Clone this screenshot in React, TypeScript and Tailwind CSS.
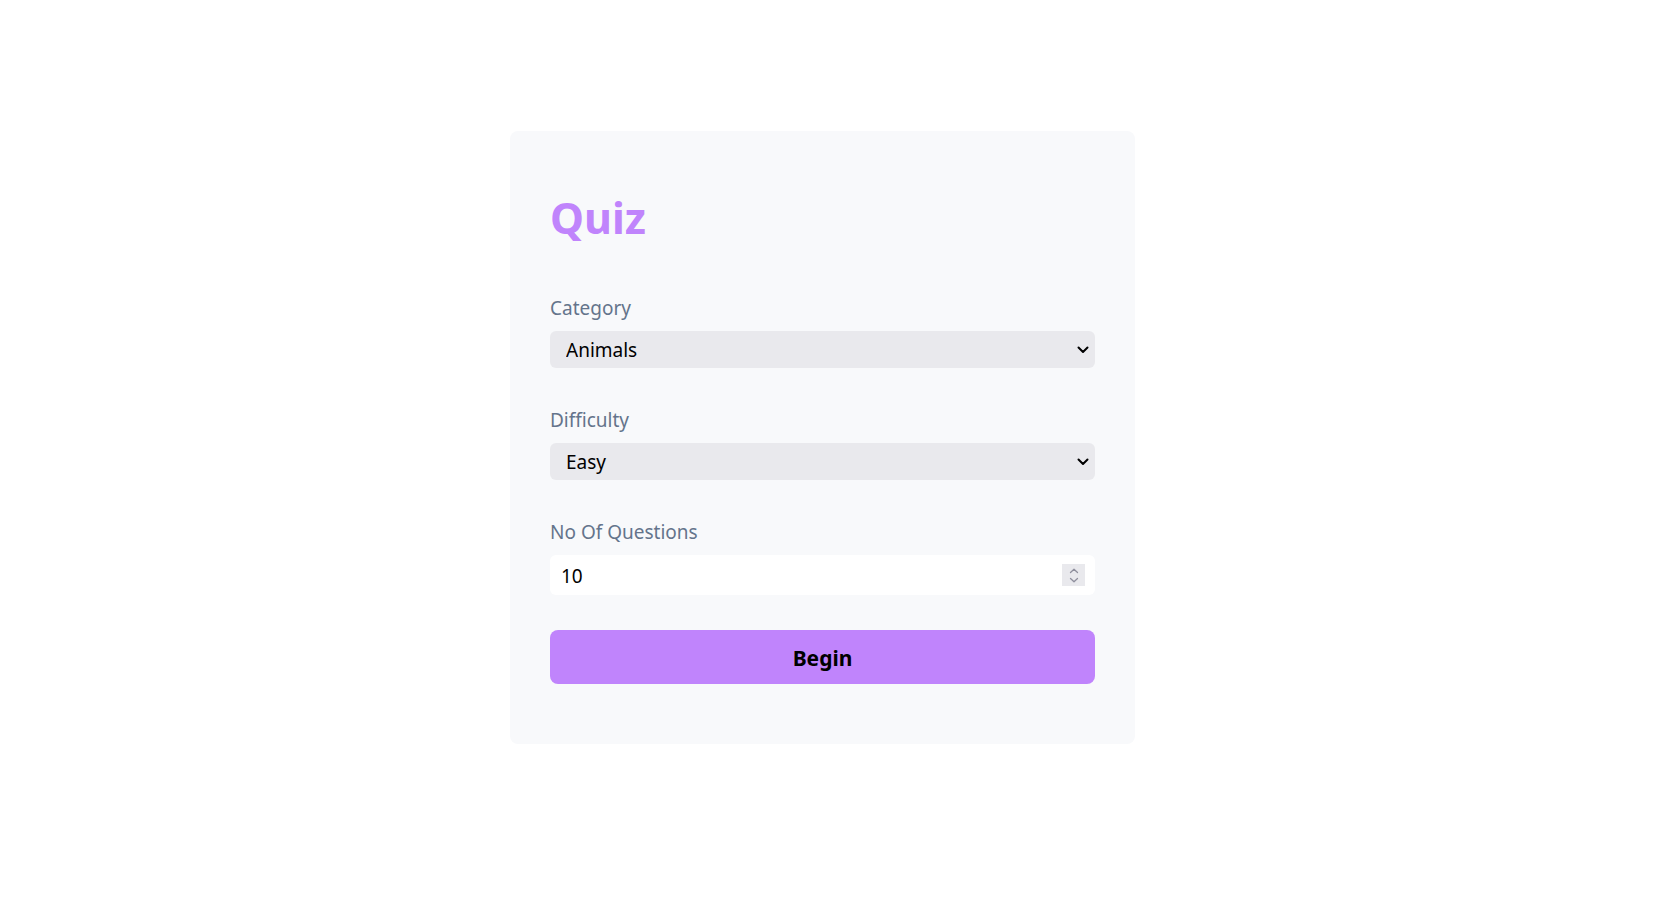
import React from "react";

function Chevron() {
  return (
    <svg width="12" height="8" viewBox="0 0 12 8" className="pointer-events-none shrink-0">
      <path d="M1.5 1.5 L6 6 L10.5 1.5" fill="none" stroke="#000" strokeWidth="2" strokeLinecap="round" strokeLinejoin="round" />
    </svg>
  );
}

function Spinner() {
  return (
    <div className="flex h-[22px] w-[23px] shrink-0 flex-col items-center justify-center gap-[3px] bg-[#e9e9ed]">
      <svg width="10" height="6" viewBox="0 0 10 6">
        <path d="M1.5 4.5 L5 1.2 L8.5 4.5" fill="none" stroke="#8f8f9d" strokeWidth="1.3" strokeLinecap="round" strokeLinejoin="round" />
      </svg>
      <svg width="10" height="6" viewBox="0 0 10 6">
        <path d="M1.5 1.5 L5 4.8 L8.5 1.5" fill="none" stroke="#8f8f9d" strokeWidth="1.3" strokeLinecap="round" strokeLinejoin="round" />
      </svg>
    </div>
  );
}

function SelectField({ label, value, options }: { label: string; value: string; options: string[] }) {
  return (
    <div className="flex flex-col">
      <label className="mb-[9px] text-[19px] leading-[28px] text-[#64748b]">{label}</label>
      <div className="flex h-[37px] items-center rounded-md bg-[#e9e9ed] pr-[6px]">
        <select
          defaultValue={value}
          className="h-full flex-1 appearance-none bg-transparent pl-4 pt-[1px] text-[19px] leading-[28px] text-black outline-none"
        >
          {options.map((o) => (
            <option key={o}>{o}</option>
          ))}
        </select>
        <Chevron />
      </div>
    </div>
  );
}

export default function App() {
  return (
    <div
      className="min-h-screen w-full bg-white"
      style={{ fontFamily: '"Noto Sans", "Open Sans", sans-serif' }}
    >
      <div className="flex justify-center pr-[20px] pt-[131px]">
        <div className="w-[625px] rounded-lg bg-[#f8f9fb] px-10 pb-[60px] pt-10">
          <h1 className="mt-6 mb-[54px] text-[43px] font-bold leading-[45px] text-[#c084fc]">Quiz</h1>
          <div className="flex flex-col gap-[38px]">
            <SelectField label="Category" value="Animals" options={["Animals", "Sports", "History", "Science"]} />
            <SelectField label="Difficulty" value="Easy" options={["Easy", "Medium", "Hard"]} />
            <div className="flex flex-col">
              <label className="mb-[9px] text-[19px] leading-[28px] text-[#64748b]">No Of Questions</label>
              <div className="flex h-[40px] items-center rounded-md bg-white pr-[10px]">
                <input
                  type="text"
                  inputMode="numeric"
                  defaultValue="10"
                  className="h-full min-w-0 flex-1 bg-transparent pl-[11px] pt-[2px] text-[19px] leading-[28px] text-black outline-none"
                />
                <Spinner />
              </div>
            </div>
          </div>
          <button className="mt-[35px] h-[54px] w-full rounded-lg bg-[#c084fc] pt-[2px] text-[21px] font-bold leading-[30px] text-black">
            Begin
          </button>
        </div>
      </div>
    </div>
  );
}
